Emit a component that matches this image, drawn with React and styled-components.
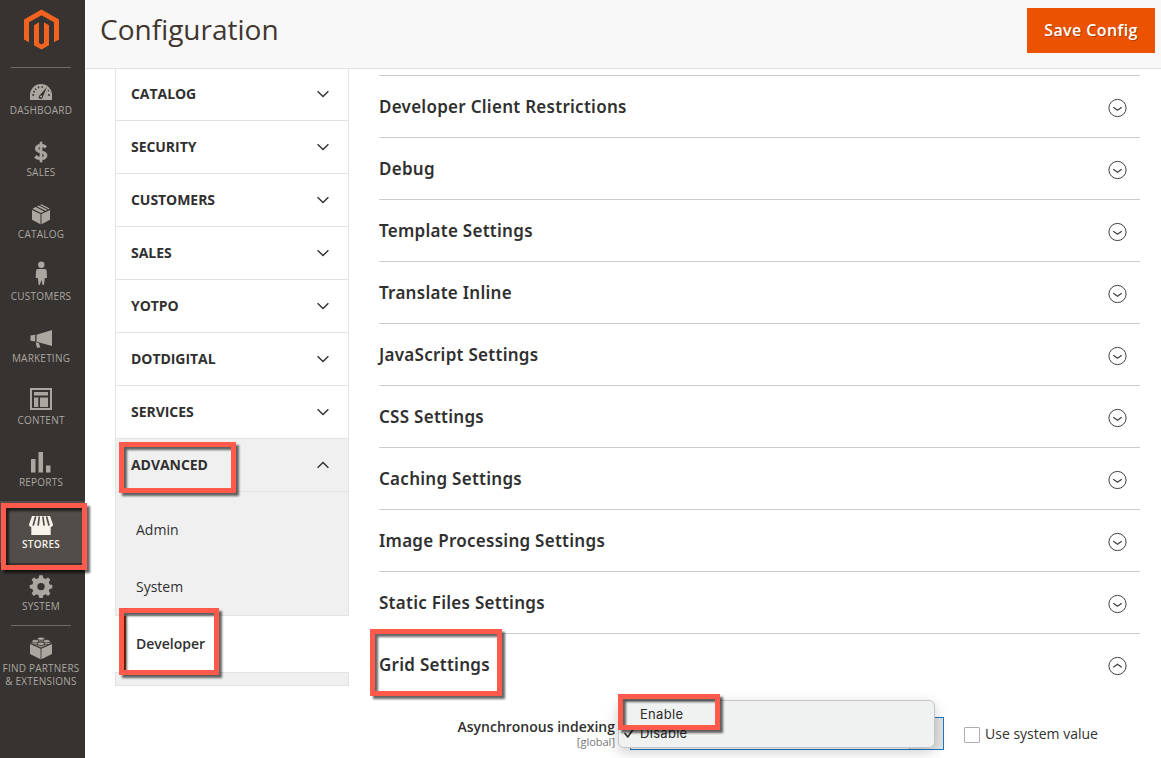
import React from 'react';
import styled, { createGlobalStyle, css } from 'styled-components';

const GlobalStyle = createGlobalStyle`
  *, *::before, *::after { box-sizing: border-box; }
  body {
    margin: 0;
    background: #fff;
    color: #303030;
    font-family: 'Open Sans', 'Noto Sans', sans-serif;
    font-size: 14px;
    overflow: hidden;
  }
`;

const Page = styled.div`
  position: relative;
  display: flex;
  width: 1161px;
  height: 758px;
  overflow: hidden;
`;

/* ---------- Admin menu ---------- */

const AdminMenu = styled.nav`
  flex: none;
  width: 85px;
  height: 758px;
  background: #373330;
`;

const LogoLink = styled.div`
  display: flex;
  height: 67px;
  padding: 9px 0 0 24px;
`;

const Divider = styled.div`
  height: 1px;
  width: 60px;
  margin: 0 0 -1px 11px;
  background: #736963;
`;

const MenuItem = styled.div`
  display: flex;
  flex-direction: column;
  align-items: center;
  height: 62px;
  padding: 10px 3px 0 0;
  color: #aaa6a0;
  ${(p) => p.$active && css`
    background: #524d49;
    color: #f7f3eb;
  `}
`;

const MenuIcon = styled.svg`
  display: block;
  flex: none;
  width: 28px;
  height: 27px;
  overflow: visible;
  fill: currentColor;
`;

const MenuLabel = styled.span`
  font-size: 10px;
  line-height: 13px;
  letter-spacing: 0.22px;
  text-align: center;
  text-transform: uppercase;
  white-space: nowrap;
  font-weight: ${(p) => (p.$active ? 600 : 400)};
`;

const BG = '#373330';

const icons = {
  dashboard: (
    <>
      <path d="M3 23v-5a11 11 0 0 1 22 0v5z" />
      <g fill="none" stroke={BG} strokeWidth="1.4">
        <path d="M5.2 18h2M6.2 14.3l1.6.8M8.2 11.6l1 1.3M11.2 9.6l.6 1.6M15.2 9.2l-.1 1.7M21 18h2M20.9 13.9l1-.6" />
      </g>
      <path d="M20 10l-4.3 10.3a2 2 0 1 1-3-2z" fill={BG} />
      <circle cx="14" cy="19.6" r="1" />
    </>
  ),
  sales: (
    <path
      stroke="currentColor"
      strokeWidth=".7"
      d="M13 3h2v2.3c2.200.3 3.800 1 4.600 2.100l-1.800 1.700c-.8-.7-1.700-1.100-2.800-1.300v4.100c3.300.8 5 1.900 5 4.500 0 2.400-1.800 4.100-5 4.400V23h-2v-2.200c-2.300-.2-4.200-1-5.400-2.300l1.800-2c1 .9 2.200 1.500 3.600 1.700v-4.400c-3-.7-4.700-1.900-4.700-4.300 0-2.300 1.900-4 4.700-4.200zm0 4.700c-1.200.2-1.800.8-1.800 1.600 0 .9.5 1.400 1.800 1.900zm2 6.600v4.100c1.400-.2 2.100-.9 2.100-1.900s-.6-1.600-2.100-2.200z"
    />
  ),
  catalog: (
    <>
      <path d="M5 8.900l8.500 4.200V23.300L5 18.800z" />
      <path d="M23 8.900l-8.500 4.200v10.200L23 18.800z" />
      <path d="M5.500 7.700l3.200-1.600 8.500 4.300-3.200 1.600zM10 5.500l1.700-.9 8.600 4.200-1.800 1zM13 3.900l1.400-.7 8.300 4.400-1.200.6z" />
    </>
  ),
  customers: (
    <>
      <circle cx="14.300" cy="1.800" r="3.200" />
      <path d="M11 6h6.600c1.300 0 2 .8 2.100 2l.3 7h-2.200l-.8 7h-1.300l-1.400-5-1.400 5h-1.300l-.8-7H8.700l.3-7c.1-1.200.8-2 2-2z" />
    </>
  ),
  marketing: (
    <>
      <path d="M25 5v16L9.500 16.800v-7z" />
      <path d="M3.500 10.400l4.700-.6v6.800l-4.700-.9z" />
      <path d="M8.800 17.200l3 .8.7 2 .8 2.200-3 .9c-.8-1.600-1.300-3.700-1.500-5.900z" />
    </>
  ),
  content: (
    <path d="M3 1h22v22H3zM5 3v18h18V3zM7 5h14v3.500H7zM7 10.500h4.300V20H7zM13 10.500h8V20h-8z" fillRule="evenodd" />
  ),
  reports: <path d="M4 10h4.500v13.500H4zM11.500 3H16v20.500h-4.500zM19 16.500h4.500v7H19z" />,
  stores: (
    <>
      <path d="M5 5h18l3 8.500c0 1.500-1 2.300-2.300 2.500V24H4.300v-8C3 15.800 2 15 2 13.500z" />
      <path
        d="M8.500 6L6.300 14M12.200 6l-1 8M16 6l1 8M19.700 6l2.200 8"
        fill="none"
        stroke="#524d49"
        strokeWidth="1.700"
        strokeLinecap="round"
      />
    </>
  ),
  system: (
    <path
      fillRule="evenodd"
      transform="translate(0 -.6)"
      d="M12.300 2.800h3.400l.7 2.900 2.200.9 2.500-1.600 2.300 2.300-1.600 2.500.9 2.200 2.600.6v3.300l-2.600.6-.9 2.200 1.600 2.500-2.300 2.300-2.500-1.600-2.200.9-.7 2.900h-3.400l-.7-2.900-2.200-.9-2.500 1.600-2.300-2.300 1.600-2.500-.9-2.200-2.600-.6v-3.300l2.600-.6.9-2.200-1.600-2.500 2.300-2.300 2.500 1.600 2.200-.9zM14 10.500a3.700 3.700 0 1 0 0 7.400 3.700 3.700 0 0 0 0-7.400z"
    />
  ),
  partners: (
    <>
      <path d="M3 9l10.600 4.800v10.400L3 19z" />
      <path d="M25 9l-10.600 4.800v10.400L25 19z" />
      <path d="M3.600 8L14 3.300 24.400 8 14 12.800z" />
      <g stroke={BG} strokeWidth=".8">
        <path d="M10.500 3.700v1.900c0 2 7 2 7 0V3.700z" />
        <ellipse cx="14" cy="3.700" rx="3.500" ry="1.700" />
        <path d="M4.800 6.200v1.900c0 2 7 2 7 0V6.200z" />
        <ellipse cx="8.300" cy="6.200" rx="3.500" ry="1.700" />
        <path d="M16.200 6.200v1.900c0 2 7 2 7 0V6.200z" />
        <ellipse cx="19.700" cy="6.200" rx="3.500" ry="1.700" />
        <path d="M10.500 8.800v1.900c0 2 7 2 7 0V8.800z" />
        <ellipse cx="14" cy="8.800" rx="3.500" ry="1.700" />
      </g>
    </>
  ),
};

const menu = [
  { icon: 'dashboard', label: 'Dashboard' },
  { icon: 'sales', label: 'Sales' },
  { icon: 'catalog', label: 'Catalog' },
  { icon: 'customers', label: 'Customers' },
  { icon: 'marketing', label: 'Marketing' },
  { icon: 'content', label: 'Content' },
  { icon: 'reports', label: 'Reports' },
  { icon: 'stores', label: 'Stores', active: true },
  { icon: 'system', label: 'System' },
];

function AdminMenuEntry({ icon, active, children }) {
  return (
    <MenuItem $active={active}>
      <MenuIcon viewBox="0 0 28 27">{icons[icon]}</MenuIcon>
      <MenuLabel $active={active}>{children}</MenuLabel>
    </MenuItem>
  );
}

/* ---------- Header ---------- */

const Content = styled.div`
  display: flex;
  flex-direction: column;
  flex: 1;
  min-width: 0;
`;

const Header = styled.header`
  display: flex;
  flex: none;
  justify-content: space-between;
  align-items: flex-start;
  height: 69px;
  padding: 8px 6px 0 15px;
  background: #f8f8f8;
  border-bottom: 1px solid #e3e3e3;
`;

const Title = styled.h1`
  margin: 2px 0 0;
  color: #41362f;
  font-size: 28px;
  line-height: 38px;
  font-weight: 400;
`;

const SaveButton = styled.button`
  width: 128px;
  height: 45px;
  padding: 0 0 2px;
  border: 0;
  background: #eb5202;
  color: #fff;
  font: 600 16px 'Open Sans', sans-serif;
  letter-spacing: 0.4px;
  text-shadow: 1px 1px 0 rgba(0, 0, 0, 0.25);
`;

const Columns = styled.div`
  display: flex;
  flex: 1;
  gap: 30px;
  padding: 0 21px 0 30px;
`;

/* ---------- Configuration tabs ---------- */

const Tabs = styled.div`
  flex: none;
  width: 234px;
`;

const Tab = styled.div`
  display: flex;
  justify-content: space-between;
  align-items: center;
  height: ${(p) => (p.$first ? 52 : 53)}px;
  padding: 0 18px ${(p) => (p.$first ? 1 : 0)}px 15px;
  border: 1px solid #e3e3e3;
  border-top: 0;
  background: ${(p) => (p.$open ? '#f0f0f0' : '#fff')};
  font-size: 14px;
  line-height: 18px;
  font-weight: 700;
  letter-spacing: -0.05px;
  text-transform: uppercase;
`;

const Chevron = styled.svg`
  width: 14px;
  height: 8px;
  fill: none;
  stroke: #303030;
  stroke-width: 1.4;
`;

const SubItems = styled.div`
  border: 1px solid #e3e3e3;
  border-top: 0;
  height: 194px;
  padding-top: 10px;
  background: #f0f0f0;
`;

const SubItem = styled.div`
  height: 57px;
  padding: 0 0 0 20px;
  line-height: 55px;
  font-size: 14px;
  ${(p) => p.$current && css`
    display: flex;
    align-items: center;
    height: 58px;
    margin: -1px -1px 0;
    padding: 0 0 1px 8px;
    border: solid #e3e3e3;
    border-width: 1px 0;
    background: #fff;
    font-weight: 600;
    &::before {
      content: '';
      width: 3px;
      height: 56px;
      margin-right: 10px;
      background: #eb5202;
    }
  `}
`;

/* ---------- Settings sections ---------- */

const Sections = styled.main`
  flex: 1;
  padding-top: 6px;
`;

const Section = styled.div`
  display: flex;
  justify-content: space-between;
  align-items: center;
  height: 62px;
  padding: 1px 13px 0 0;
  border-top: 1px solid #ccc;
`;

const SectionTitle = styled.span`
  font-family: 'Noto Sans', 'Open Sans', sans-serif;
  font-size: 17px;
  line-height: 24px;
  font-weight: 600;
  letter-spacing: 0.27px;
`;

const ToggleIcon = styled.svg`
  width: 19px;
  height: 20px;
  margin-top: 2px;
  fill: none;
  stroke: #41403e;
`;

const FieldRow = styled.div`
  display: flex;
  align-items: flex-start;
  padding-top: 23px;
`;

const FieldLabel = styled.div`
  display: flex;
  flex-direction: column;
  align-items: flex-end;
  width: 236px;
  font-size: 14px;
  line-height: 18px;
  font-weight: 600;
`;

const Scope = styled.span`
  margin-top: -1px;
  font-size: 11px;
  line-height: 13px;
  font-weight: 400;
  color: #777;
`;

const Select = styled.div`
  position: relative;
  display: flex;
  justify-content: flex-end;
  width: 314px;
  height: 33px;
  margin: -1px 20px 0 15px;
  border: 1px solid #1979c3;
  background: #fff;
`;

const SelectArrow = styled.div`
  width: 34px;
  border-left: 1px solid #adadad;
  background: #e3e3e3;
`;

const Popup = styled.div`
  position: absolute;
  left: -13px;
  top: -18px;
  width: 317px;
  height: 48px;
  padding: 3px 0 0 4px;
  border: 1px solid #c4c5c5;
  border-radius: 6px;
  background: #f0f1f1;
  box-shadow: 0 4px 14px rgba(0, 0, 0, 0.2);
`;

const Option = styled.div`
  display: flex;
  align-items: center;
  height: 19px;
  font: 13px Inter, 'Liberation Sans', sans-serif;
  letter-spacing: 0.3px;
  color: #2b2b2b;
`;

const CheckSlot = styled.svg`
  width: 17px;
  height: 12px;
  fill: none;
  stroke: #2b2b2b;
  stroke-width: 1.6;
  stroke-linecap: round;
  stroke-linejoin: round;
`;

const UseSystem = styled.label`
  display: flex;
  align-items: center;
  gap: 5px;
  height: 33px;
  margin-top: -1px;
  font-size: 14px;
`;

const Checkbox = styled.span`
  width: 16px;
  height: 16px;
  margin-top: 2px;
  border: 1px solid #adadad;
  border-radius: 1px;
  background: #fff;
`;

/* ---------- Highlights over the page ---------- */

const Highlight = styled.div`
  position: absolute;
  left: ${(p) => p.$x}px;
  top: ${(p) => p.$y}px;
  width: ${(p) => p.$w}px;
  height: ${(p) => p.$h}px;
  border: 5px solid #ff5a4c;
  filter: drop-shadow(3px 3px 1px rgba(0, 0, 0, 0.6));
  pointer-events: none;
`;

const tabs = ['Catalog', 'Security', 'Customers', 'Sales', 'Yotpo', 'Dotdigital', 'Services'];

const sections = [
  'Developer Client Restrictions',
  'Debug',
  'Template Settings',
  'Translate Inline',
  'JavaScript Settings',
  'CSS Settings',
  'Caching Settings',
  'Image Processing Settings',
  'Static Files Settings',
  'Grid Settings',
];

function TabRow({ open, first, children }) {
  return (
    <Tab $open={open} $first={first}>
      {children}
      <Chevron viewBox="0 0 14 8">
        <path d={open ? 'M1.600 6.800L7 1.500 12.400 6.800' : 'M1.600 1.200L7 6.500 12.400 1.200'} />
      </Chevron>
    </Tab>
  );
}

export default function App() {
  return (
    <Page>
      <GlobalStyle />
      <AdminMenu>
        <LogoLink>
          <svg width="35" height="41" viewBox="0 0 35 41" fill="#f26322">
            <path d="M17.500.5L35 10.500v20l-5 2.800v-20L17.500 6.200 5 13.300v20l-5-2.800v-20z" />
            <path d="M10 16.200l5-2.900V34l2.500 1.500L20 34V13.300l5 2.900v20l-7.500 4.300-7.500-4.300z" />
          </svg>
        </LogoLink>
        <Divider />
        {menu.map((m) => (
          <AdminMenuEntry key={m.label} icon={m.icon} active={m.active}>
            {m.label}
          </AdminMenuEntry>
        ))}
        <Divider />
        <AdminMenuEntry icon="partners">
          Find Partners
          <br />
          &amp; Extensions
        </AdminMenuEntry>
      </AdminMenu>

      <Content>
        <Header>
          <Title>Configuration</Title>
          <SaveButton>Save Config</SaveButton>
        </Header>
        <Columns>
          <Tabs>
            {tabs.map((t, i) => (
              <TabRow key={t} first={i === 0}>
                {t}
              </TabRow>
            ))}
            <TabRow open>Advanced</TabRow>
            <SubItems>
              <SubItem>Admin</SubItem>
              <SubItem>System</SubItem>
              <SubItem $current>Developer</SubItem>
            </SubItems>
          </Tabs>
          <Sections>
            {sections.map((s, i) => (
              <Section key={s}>
                <SectionTitle>{s}</SectionTitle>
                <ToggleIcon viewBox="0 -0.5 19 20">
                  <circle cx="9.500" cy="9.500" r="8.600" />
                  <path
                    strokeWidth="1.300"
                    d={i === sections.length - 1 ? 'M5.300 10.800l4.200-3 4.200 3' : 'M5.300 8.700l4.200 3 4.200-3'}
                  />
                </ToggleIcon>
              </Section>
            ))}
            <FieldRow>
              <FieldLabel>
                Asynchronous indexing
                <Scope>[global]</Scope>
              </FieldLabel>
              <Select>
                <SelectArrow />
                <Popup>
                  <Option>
                    <CheckSlot viewBox="0 0 17 12" />
                    Enable
                  </Option>
                  <Option>
                    <CheckSlot viewBox="0 0 17 12">
                      <path d="M2 6.500L4.800 10 10 2.500" />
                    </CheckSlot>
                    Disable
                  </Option>
                </Popup>
              </Select>
              <UseSystem>
                <Checkbox />
                Use system value
              </UseSystem>
            </FieldRow>
          </Sections>
        </Columns>
      </Content>

      <Highlight $x={1} $y={503} $w={86} $h={67} />
      <Highlight $x={119} $y={442} $w={117} $h={51} />
      <Highlight $x={119} $y={608} $w={100} $h={67} />
      <Highlight $x={370} $y={629} $w={132} $h={67} />
      <Highlight $x={618} $y={694} $w={102} $h={36} />
    </Page>
  );
}
